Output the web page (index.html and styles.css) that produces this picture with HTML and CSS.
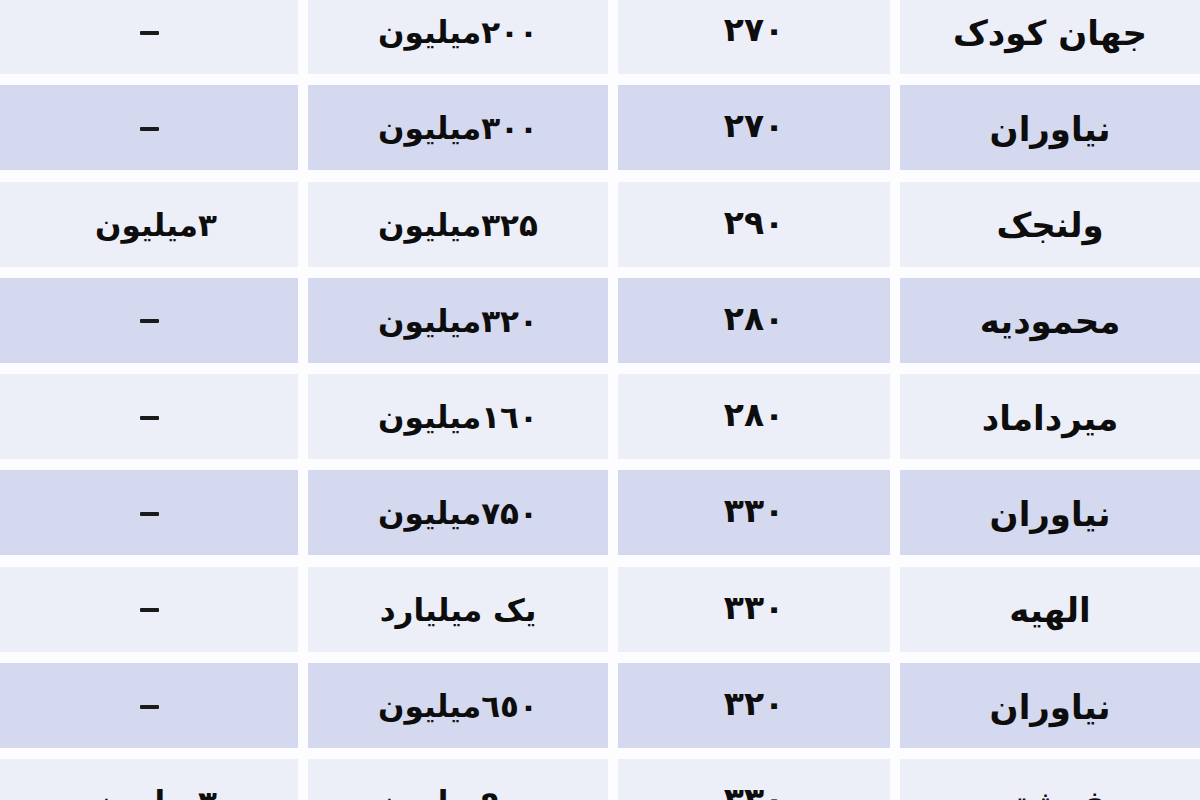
FILE: index.html
```html
<!DOCTYPE html>
<html lang="fa" dir="rtl">
<head>
<meta charset="utf-8">
<title>جدول قیمت</title>
<link rel="stylesheet" href="styles.css">
</head>
<body>
<div class="table">
  <div class="row light">
    <div class="cell c-name">جهان کودک</div>
    <div class="cell c-num">۲۷۰</div>
    <div class="cell c-price">۲۰۰میلیون</div>
    <div class="cell c-rent"><span class="dash"></span></div>
  </div>
  <div class="row blue">
    <div class="cell c-name">نیاوران</div>
    <div class="cell c-num">۲۷۰</div>
    <div class="cell c-price">۳۰۰میلیون</div>
    <div class="cell c-rent"><span class="dash"></span></div>
  </div>
  <div class="row light">
    <div class="cell c-name">ولنجک</div>
    <div class="cell c-num">۲۹۰</div>
    <div class="cell c-price">۳۲۵میلیون</div>
    <div class="cell c-rent">۳میلیون</div>
  </div>
  <div class="row blue">
    <div class="cell c-name">محمودیه</div>
    <div class="cell c-num">۲۸۰</div>
    <div class="cell c-price">۳۲۰میلیون</div>
    <div class="cell c-rent"><span class="dash"></span></div>
  </div>
  <div class="row light">
    <div class="cell c-name">میرداماد</div>
    <div class="cell c-num">۲۸۰</div>
    <div class="cell c-price">١٦٠میلیون</div>
    <div class="cell c-rent"><span class="dash"></span></div>
  </div>
  <div class="row blue">
    <div class="cell c-name">نیاوران</div>
    <div class="cell c-num">۳۳۰</div>
    <div class="cell c-price">۷۵۰میلیون</div>
    <div class="cell c-rent"><span class="dash"></span></div>
  </div>
  <div class="row light">
    <div class="cell c-name">الهیه</div>
    <div class="cell c-num">۳۳۰</div>
    <div class="cell c-price">یک میلیارد</div>
    <div class="cell c-rent"><span class="dash"></span></div>
  </div>
  <div class="row blue">
    <div class="cell c-name">نیاوران</div>
    <div class="cell c-num">۳۲۰</div>
    <div class="cell c-price">٦٥٠میلیون</div>
    <div class="cell c-rent"><span class="dash"></span></div>
  </div>
  <div class="row light">
    <div class="cell c-name">فرشته</div>
    <div class="cell c-num">۳۳۰</div>
    <div class="cell c-price">۹۰۰میلیون</div>
    <div class="cell c-rent">۳میلیون</div>
  </div>
</div>
</body>
</html>
```

FILE: styles.css
```css
html, body {
  margin: 0;
  padding: 0;
  background: #fdfdff;
  overflow: hidden;
}

body {
  width: 1200px;
  height: 800px;
  font-family: "DejaVu Sans", sans-serif;
  font-weight: bold;
  color: #0d0d0d;
}

.table {
  display: flex;
  flex-direction: column;
  gap: 11.3px;
  margin-top: -11px;
}

.row {
  display: grid;
  grid-template-columns: 300px 272px 300px 298px;
  column-gap: 10px;
  height: 85px;
}

.cell {
  display: flex;
  align-items: center;
  justify-content: center;
  padding-top: 2px;
  box-sizing: border-box;
  font-size: 31px;
  line-height: 1;
}

.light .cell {
  background: #eceef8;
}

.blue .cell {
  background: #d5d9ef;
}

.c-name {
  font-size: 34px;
}

.c-num {
  font-size: 33px;
  letter-spacing: 3px;
  padding-top: 0;
  padding-bottom: 4px;
}

.c-rent {
  padding-left: 14px;
}

.dash {
  display: block;
  width: 19px;
  height: 4px;
  margin-right: 14px;
  background: #1a1a1a;
  border-radius: 1px;
}
```
